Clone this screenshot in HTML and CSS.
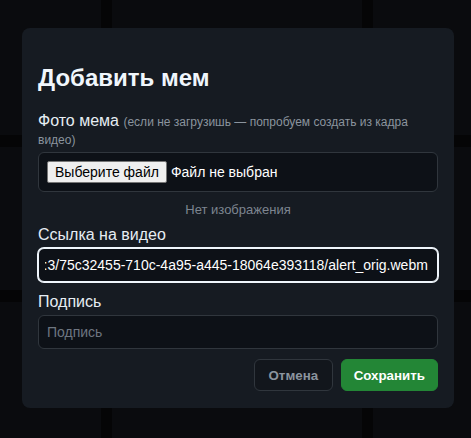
FILE: index.html
```html
<!DOCTYPE html>
<html lang="ru">
<head>
<meta charset="utf-8">
<title>Добавить мем</title>
<link rel="stylesheet" href="styles.css">
</head>
<body>
<div class="page">
  <div class="card"></div><div class="card"></div><div class="card"></div>
  <div class="card"></div><div class="card"></div><div class="card"></div>
  <div class="card"></div><div class="card"></div><div class="card"></div>
</div>
<div class="modal" role="dialog">
  <h2 class="modal-title">Добавить мем</h2>
  <label class="field-label" for="photo">Фото мема <span class="hint">(если не загрузишь — попробуем создать из кадра видео)</span></label>
  <div class="file-box">
    <input type="file" id="photo" class="file-hidden">
    <label for="photo" class="file-button">Выберите файл</label>
    <span class="file-name">Файл не выбран</span>
  </div>
  <div class="preview">Нет изображения</div>
  <label class="field-label" for="video">Ссылка на видео</label>
  <input id="video" class="text-input focused" type="text" value="https://memes.local:3/75c32455-710c-4a95-a445-18064e393118/alert_orig.webm">
  <label class="field-label spaced" for="caption">Подпись</label>
  <input id="caption" class="text-input" type="text" placeholder="Подпись">
  <div class="actions">
    <button class="btn btn-cancel" type="button">Отмена</button>
    <button class="btn btn-save" type="button">Сохранить</button>
  </div>
</div>
<script src="script.js"></script>
</body>
</html>
```
FILE: styles.css
```css
* { box-sizing: border-box; }
html, body { margin: 0; padding: 0; }
body {
  width: 471px;
  height: 438px;
  overflow: hidden;
  background: #050506;
  font-family: "Liberation Sans", Arial, sans-serif;
  color: #e6edf3;
}
.page {
  display: grid;
  grid-template-columns: 101px 250px 1fr;
  grid-template-rows: 135px 143px 1fr;
  column-gap: 11px;
  row-gap: 12px;
  height: 438px;
}
.card { background: #0a0b0e; }
.modal {
  position: absolute;
  left: 22px;
  top: 28px;
  width: 432px;
  padding: 16px 16px 17px;
  background: #161b22;
  border-radius: 8px;
}
.modal-title {
  font-size: 24px;
  font-weight: 700;
  margin: 20px 0 20px;
  color: #f0f6fc;
}
.field-label {
  display: block;
  font-size: 16px;
  margin-bottom: 4px;
  color: #e6edf3;
}
.field-label.spaced { margin-top: 11px; }
.hint {
  font-size: 12px;
  color: #8b949e;
}
.file-box {
  display: flex;
  align-items: center;
  height: 40px;
  padding: 0 8px;
  background: #0d1117;
  border: 1px solid #30363d;
  border-radius: 6px;
}
.file-hidden { display: none; }
.file-button {
  display: inline-block;
  height: 22px;
  line-height: 16px;
  padding: 2px 7px;
  font-size: 14px;
  color: #000;
  background: #efefef;
  border: 1px solid #767676;
  border-radius: 2px;
}
.file-name {
  font-size: 14px;
  margin-left: 4px;
  color: #ffffff;
}
.preview {
  text-align: center;
  font-size: 13px;
  color: #7d8590;
  margin: 10px 0 9px;
}
.text-input {
  display: block;
  width: 100%;
  height: 34px;
  padding: 0 9px 0 6px;
  font-family: "Liberation Sans", Arial, sans-serif;
  font-size: 14px;
  color: #ffffff;
  background: #0d1117;
  border: 1px solid #30363d;
  border-radius: 6px;
  outline: none;
}
#caption { padding-left: 8px; }
.text-input::placeholder { color: #6e7681; }
.text-input.focused {
  border-color: #f0f6fc;
  box-shadow: 0 0 0 1px #f0f6fc;
}
.actions {
  display: flex;
  justify-content: flex-end;
  gap: 8px;
  margin-top: 10px;
}
.btn {
  height: 32px;
  padding: 0 12px;
  font-family: "Liberation Sans", Arial, sans-serif;
  font-size: 13.33px;
  font-weight: 700;
  border-radius: 6px;
  cursor: pointer;
}
.btn-cancel {
  background: #12161c;
  color: #8b949e;
  border: 1px solid #30363d;
  padding: 0 13.5px;
}
.btn-save {
  background: #238636;
  color: #ffffff;
  border: 1px solid #238636;
}
```
FILE: script.js
```js
var v = document.getElementById('video');
v.focus();
v.setSelectionRange(v.value.length, v.value.length);
v.scrollLeft = v.scrollWidth;
```
